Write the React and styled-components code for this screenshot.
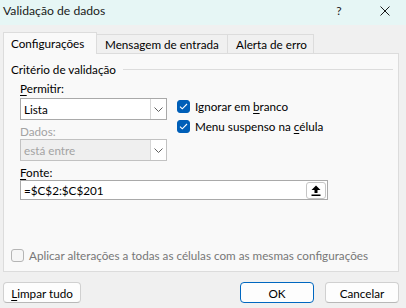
import React from 'react';
import styled, { createGlobalStyle } from 'styled-components';

const Global = createGlobalStyle`
  html, body { margin: 0; padding: 0; }
  body {
    width: 406px; height: 308px; overflow: hidden;
    background: #f0f0f0;
    font-family: Lato, "Noto Sans", sans-serif;
    font-size: 11.7px; color: #000;
  }
  * { box-sizing: border-box; }
`;

const Window = styled.div`
  width: 406px; height: 308px;
  display: flex; flex-direction: column;
  background: #f0f0f0;
`;

const TitleBar = styled.div`
  height: 25px; flex: none;
  background: #e6f6f5;
  display: flex; align-items: center;
  padding-left: 3px;
  padding-bottom: 4px;
`;

const Title = styled.span`
  flex: 1;
  font-size: 12.2px;
  color: #1a1a1a;
`;

const TitleBtn = styled.span`
  width: ${p => p.$w}px;
  margin-left: ${p => p.$ml || 0}px;
  display: flex; align-items: center; justify-content: center;
  color: #1a1a1a;
  font-size: 12px;
`;

const TabStrip = styled.div`
  margin-top: 7px;
  height: 21px; flex: none;
  display: flex; align-items: flex-end;
  padding-left: 3px;
  position: relative; z-index: 1;
`;

const Tab = styled.div`
  height: ${p => (p.$active ? 22 : 19)}px;
  margin-bottom: ${p => (p.$active ? -1 : 0)}px;
  width: ${p => p.$w}px;
  margin-left: ${p => (p.$first ? 0 : -1)}px;
  border: 1px solid #dcdcdc;
  border-bottom: none;
  background: ${p => (p.$active ? '#f9f9f9' : '#f0f0f0')};
  padding-left: ${p => p.$pl}px;
  display: flex; align-items: center;
  padding-bottom: ${p => (p.$active ? 2 : 0)}px;
  white-space: nowrap;
`;

const Panel = styled.div`
  margin-left: 3px;
  width: 396px; height: 219px; flex: none;
  background: #f9f9f9;
  border: 1px solid #dcdcdc;
  padding: 7px 5px 0 7px;
  display: flex; flex-direction: column;
`;

const GroupHead = styled.div`
  height: 16px;
  display: flex; align-items: center; gap: 7px;
  white-space: nowrap;
`;

const Rule = styled.div`
  flex: 1; height: 1px; background: #dcdcdc;
  margin-top: 1px;
`;

const Form = styled.div`
  margin-left: 9px;
  display: flex; flex-direction: column;
`;

const Columns = styled.div`
  display: flex; gap: 10px;
`;

const LeftCol = styled.div`
  width: 147px;
  display: flex; flex-direction: column;
`;

const RightCol = styled.div`
  padding-top: 19px;
  display: flex; flex-direction: column;
`;

const Label = styled.div`
  height: 16px; line-height: 16px;
  margin-top: ${p => p.$mt || 0}px;
  margin-bottom: ${p => p.$mb || 0}px;
  color: ${p => (p.$disabled ? '#a3a3a3' : '#000')};
`;

const U = styled.span`text-decoration: underline; text-underline-offset: 2px;`;

const Select = styled.div`
  height: 22px;
  display: flex;
  border: 1px solid ${p => (p.$disabled ? '#c2c2c2' : '#a9a9a9')};
  background: ${p => (p.$disabled ? '#efefef' : '#fff')};
  color: ${p => (p.$disabled ? '#a3a3a3' : '#000')};
`;

const SelectValue = styled.div`
  flex: 1;
  padding-left: 3px;
  display: flex; align-items: center;
`;

const DropBtn = styled.div`
  width: 16px;
  border-left: 1px solid #d6d6d6;
  background: #fff;
  display: flex; align-items: center; justify-content: center;
`;

const CheckRow = styled.div`
  height: 20px;
  display: flex; align-items: center; gap: 5px;
  white-space: nowrap;
  color: ${p => (p.$disabled ? '#777' : '#000')};
`;

const Box = styled.div`
  width: 13px; height: 13px; flex: none;
  border-radius: 3px;
  background: ${p => (p.$checked ? '#005fb8' : '#f6f6f6')};
  border: 1px solid ${p => (p.$checked ? '#005fb8' : '#b5b5b5')};
  display: flex; align-items: center; justify-content: center;
`;

const Input = styled.div`
  width: 308px; height: 20px;
  border: 1px solid #a9a9a9;
  background: #fff;
  display: flex; align-items: center;
  padding-left: 3px; padding-right: 1px;
`;

const InputText = styled.span`flex: 1;`;

const PickBtn = styled.div`
  width: 20px; height: 17px;
  border: 1px solid #c6c6c6;
  border-radius: 3px;
  background: #fff;
  display: flex; align-items: center; justify-content: center;
`;

const ApplyRow = styled(CheckRow)`
  margin-top: auto;
  margin-bottom: 9px;
  height: 14px;
`;

const Footer = styled.div`
  margin-top: 10px;
  padding: 0 7px 0 3px;
  display: flex; align-items: center; gap: 11px;
`;

const Button = styled.div`
  width: ${p => p.$w}px; height: 21px;
  border-radius: 4px;
  background: #fdfdfd;
  border: 1px solid ${p => (p.$primary ? '#0067c0' : '#d0d0d0')};
  border-bottom-color: ${p => (p.$primary ? '#0067c0' : '#b8b8b8')};
  display: flex; align-items: center; justify-content: center;
  margin-left: ${p => (p.$push ? 'auto' : '0')};
`;

const Chevron = () => (
  <svg width="9" height="5" viewBox="0 0 9 5">
    <path d="M0.5 0.5 L4.5 4.5 L8.5 0.5" fill="none" stroke="#606060" strokeWidth="1" />
  </svg>
);

const Check = () => (
  <svg width="9" height="7" viewBox="0 0 9 7">
    <path d="M1 3.6 L3.3 5.8 L8 1" fill="none" stroke="#fff" strokeWidth="1.1" />
  </svg>
);

const UpArrow = () => (
  <svg width="10" height="11" viewBox="0 0 10 11">
    <path d="M5 0.5 L9.5 5 L6.5 5 L6.5 8 L3.5 8 L3.5 5 L0.5 5 Z" fill="#000" />
    <rect x="0.5" y="9.5" width="9" height="1.5" fill="#000" />
  </svg>
);

const CloseX = () => (
  <svg width="10" height="10" viewBox="0 0 10 10">
    <path d="M0.5 0.5 L9.5 9.5 M9.5 0.5 L0.5 9.5" stroke="#1a1a1a" strokeWidth="1" />
  </svg>
);

export default function App() {
  return (
    <Window>
      <Global />
      <TitleBar>
        <Title>Validação de dados</Title>
        <TitleBtn $w={12}>?</TitleBtn>
        <TitleBtn $w={18} $ml={31}><CloseX /></TitleBtn>
        <TitleBtn $w={12} />
      </TitleBar>
      <TabStrip>
        <Tab $active $first $w={94} $pl={7}>Configurações</Tab>
        <Tab $w={132} $pl={8}>Mensagem de entrada</Tab>
        <Tab $w={87} $pl={8}>Alerta de erro</Tab>
      </TabStrip>
      <Panel>
        <GroupHead>
          Critério de validação
          <Rule />
        </GroupHead>
        <Form>
          <Columns>
            <LeftCol>
              <Label $mt={3} $mb={2}><U>P</U>ermitir:</Label>
              <Select>
                <SelectValue>Lista</SelectValue>
                <DropBtn><Chevron /></DropBtn>
              </Select>
              <Label $disabled $mt={3} $mb={0}>Dados:</Label>
              <Select $disabled>
                <SelectValue>está entre</SelectValue>
                <DropBtn><Chevron /></DropBtn>
              </Select>
            </LeftCol>
            <RightCol>
              <CheckRow>
                <Box $checked><Check /></Box>
                <span>Ignorar em <U>b</U>ranco</span>
              </CheckRow>
              <CheckRow>
                <Box $checked><Check /></Box>
                <span>Menu suspenso na <U>c</U>élula</span>
              </CheckRow>
            </RightCol>
          </Columns>
          <Label $mt={3}><U>F</U>onte:</Label>
          <Input>
            <InputText>=$C$2:$C$201</InputText>
            <PickBtn><UpArrow /></PickBtn>
          </Input>
        </Form>
        <ApplyRow $disabled>
          <Box />
          <span>Aplicar alterações a todas as células com as mesmas configurações</span>
        </ApplyRow>
      </Panel>
      <Footer>
        <Button $w={78}><span><U>L</U>impar tudo</span></Button>
        <Button $w={74} $primary $push>OK</Button>
        <Button $w={74}>Cancelar</Button>
      </Footer>
    </Window>
  );
}
